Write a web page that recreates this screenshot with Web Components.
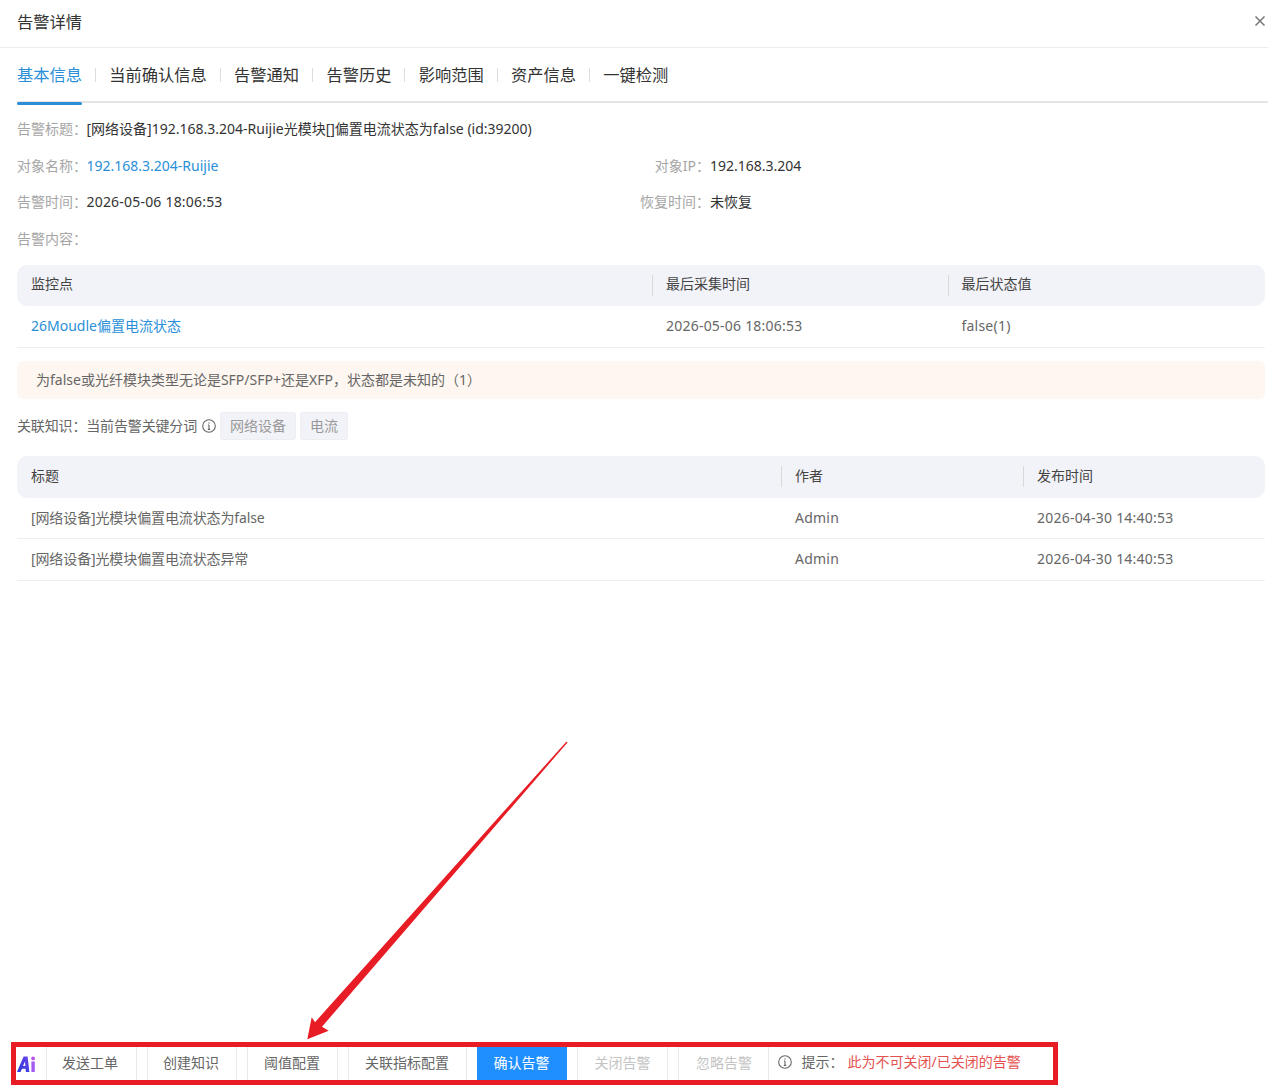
<!DOCTYPE html>
<html lang="zh-CN"><head><meta charset="utf-8">
<style>
html,body{margin:0;padding:0;background:#fff;}
body{width:1268px;height:1092px;overflow:hidden;position:relative;font-family:"Noto Sans","Noto Sans CJK SC",sans-serif;font-size:14px;color:#333;}
</style></head><body>
<alert-dialog>
  <span slot="title">告警详情</span>
  <tab-bar></tab-bar>
  <div style="padding:8px 3px 0 17px">
    <info-line label="告警标题&#xFF1A;" value="[网络设备]192.168.3.204-Ruijie光模块[]偏置电流状态为false (id:39200)"></info-line>
    <info-pair l1="对象名称&#xFF1A;" v1="192.168.3.204-Ruijie" link="1" l2="对象IP&#xFF1A;" v2="192.168.3.204"></info-pair>
    <info-pair l1="告警时间&#xFF1A;" v1="2026-05-06 18:06:53" ls=".2" l2="恢复时间&#xFF1A;" v2="未恢复"></info-pair>
    <info-line label="告警内容&#xFF1A;" value=""></info-line>
    <data-table style="margin-top:7px" cols="635,295.5,317.5" head="监控点|最后采集时间|最后状态值" rows="26Moudle偏置电流状态|2026-05-06 18:06:53|false(1)" link="1" h1="41" h2="42" up="3" first="0"></data-table>
    <alert-note>为false或光纤模块类型无论是SFP/SFP+还是XFP&#xFF0C;状态都是未知的&#xFF08;1&#xFF09;</alert-note>
    <knowledge-row></knowledge-row>
    <data-table style="margin-top:16px" cols="764,242,242" head="标题|作者|发布时间" rows="[网络设备]光模块偏置电流状态为false|Admin|2026-04-30 14:40:53;[网络设备]光模块偏置电流状态异常|Admin|2026-04-30 14:40:53" h1="42" h2="41.5" up="2" first="-.12"></data-table>
  </div>
</alert-dialog>
<action-bar></action-bar>
<red-annotation></red-annotation>
<script>
const info=`<svg width="14" height="14" viewBox="0 0 14 14" fill="none" stroke="#666" stroke-width="1.1" style="flex:none"><circle cx="7" cy="7" r="6.3"/><path d="M7 6v4.2M5.8 10.4h2.4M5.9 6h1.1" /><circle cx="7" cy="3.9" r=".7" fill="#666" stroke="none"/></svg>`;
function def(name,html){customElements.define(name,class extends HTMLElement{connectedCallback(){if(this.shadowRoot)return;const s=this.attachShadow({mode:'open'});s.innerHTML=typeof html==='function'?html(this):html;}});}
def('alert-dialog',`<style>:host{display:block}
.h{height:48px;border-bottom:1px solid #ececec;display:flex;align-items:center;justify-content:space-between;padding:0 2px 5px 17px;box-sizing:border-box;font-size:16.25px;color:#333}
.h svg{display:block}</style>
<div class="h"><slot name="title"></slot><svg width="12" height="12" viewBox="0 0 12 12" stroke="#777" stroke-width="1.5"><path d="M1.5 1.5l9 9M10.5 1.5l-9 9"/></svg></div><slot></slot>`);
def('tab-bar',`<style>:host{display:flex;height:55px;margin:0 0 0 17px;border-bottom:2px solid #e4e4e4;box-sizing:border-box;font-size:16.25px;color:#333}
.t{position:relative;line-height:54px;height:55px;white-space:nowrap}
.t.a{color:#2a8fd8}.t.a:after{content:"";position:absolute;left:0;right:0;bottom:-2px;height:3px;background:#2a8fd8;border-radius:2px}
i{width:1px;height:14px;background:#ddd;margin:20px 13.3px 0 13px}</style>
<div class="t a">基本信息</div><i></i><div class="t">当前确认信息</div><i></i><div class="t">告警通知</div><i></i><div class="t">告警历史</div><i></i><div class="t">影响范围</div><i></i><div class="t">资产信息</div><i></i><div class="t">一键检测</div>`);
const lab=`.l{color:#a6a6a6}.v{color:#333}.v.k{color:#2a8fd8}`;
def('info-line',e=>`<style>:host{display:block;height:36.67px;line-height:36.67px;font-size:14px;white-space:nowrap}${lab}</style><span class="l">${e.getAttribute('label')}</span><span class="v" style="margin-left:-.5px">${e.getAttribute('value')}</span>`);
def('info-pair',e=>`<style>:host{display:flex;height:36.67px;line-height:36.67px;font-size:14px;white-space:nowrap}${lab}
.c{width:623px;flex:none}.r{width:70px;display:inline-block;text-align:right}</style>
<div class="c"><span class="l">${e.getAttribute('l1')}</span><span class="v ${e.getAttribute('link')?'k':''}" style="letter-spacing:${e.getAttribute('ls')||0}px;margin-left:-.5px">${e.getAttribute('v1')}</span></div>
<div><span class="l r">${e.getAttribute('l2')}</span><span class="v">${e.getAttribute('v2')}</span></div>`);
def('data-table',e=>{const c=e.getAttribute('cols').split(',').map(x=>x+'px').join(' ');const h1=+e.getAttribute('h1'),h2=+e.getAttribute('h2'),up=+e.getAttribute('up');const k=e.getAttribute('link');
return `<style>:host{display:block;width:1248px;font-size:14px}
.r{display:grid;grid-template-columns:${c};}
.hd{background:#f2f3f8;border-radius:10px;height:${h1}px;color:#444}
.hd div{padding-left:14px;line-height:${h1-up}px;position:relative;white-space:nowrap}
.hd div+div:before{content:"";position:absolute;left:0;top:10px;height:21px;width:1px;background:#d9d9d9}
.b{height:${h2}px;border-bottom:1px solid #eee;box-sizing:border-box;color:#666;letter-spacing:.22px}
.b div{padding-left:14px;line-height:${h2-2}px;white-space:nowrap}
.b div:first-child{letter-spacing:${e.getAttribute('first')}px}
.b .k{color:#2a8fd8}</style>
<div class="r hd">${e.getAttribute('head').split('|').map(x=>`<div>${x}</div>`).join('')}</div>
${e.getAttribute('rows').split(';').map(r=>`<div class="r b">${r.split('|').map((x,i)=>`<div class="${k&&i==0?'k':''}">${x}</div>`).join('')}</div>`).join('')}`});
def('alert-note',`<style>:host{display:block;width:1229px;height:38px;margin-top:13px;padding-left:19px;background:#fef6f0;border-radius:6px;line-height:37px;color:#666;font-size:14px}</style><slot></slot>`);
def('knowledge-row',`<style>:host{display:flex;align-items:center;height:28px;margin-top:13px;color:#666;font-size:14px;white-space:nowrap;line-height:26px}
.x{letter-spacing:-.15px}.g{margin:0 0 0 4px;display:flex}.t{height:28px;line-height:26px;padding:0 9px;background:#f2f3f8;border:1px solid #eceef2;box-sizing:border-box;border-radius:3px;color:#999;margin-right:4px}
svg{margin-left:5px}</style><span class="x">关联知识&#xFF1A;当前告警关键分词</span>${info}<div class="g"><div class="t">网络设备</div><div class="t">电流</div></div>`);
def('action-bar',`<style>:host{position:absolute;left:17px;top:1046px;width:1036px;height:34px;display:flex;align-items:stretch;font-size:14px;color:#666;white-space:nowrap}
.ai{width:29px;flex:none;display:flex;align-items:center;padding-top:1px;box-sizing:border-box}
.b{border:solid #eaeaea;border-width:0 1px;line-height:34px;box-sizing:border-box;text-align:left;flex:none}
.b.p{background:#1f8fff;color:#fff;border-color:#1f8fff}.b.d{color:#c4c4c4}
.tip{display:flex;align-items:center;margin-left:9px;padding-bottom:2px;line-height:20px}.tip svg{margin:0 10px 0 0}.red{color:#e4524f;margin-left:4px}
</style>
<div class="ai"><svg width="19" height="16" viewBox="0 0 19 16"><defs><linearGradient id="g" x1="0" x2="1" y1="1" y2="0"><stop offset="0" stop-color="#2636dc"/><stop offset="1" stop-color="#6a46ea"/></linearGradient></defs><path fill="url(#g)" d="M0 16 L6.6 .5h4L12.4 16H8.9L8.6 12.8H5L3.5 16zM6 10h2.4L8 5.4z"/><rect x="14.4" y="5.5" width="3.4" height="10.5" fill="#a65af2"/><circle cx="16.1" cy="2.4" r="1.9" fill="#c04fe8"/></svg></div>
<div class="b" style="width:91px;padding-left:15px;margin-right:10px">发送工单</div><div class="b" style="width:90px;padding-left:15px;margin-right:10px">创建知识</div><div class="b" style="width:91px;padding-left:16px;margin-right:10px">阈值配置</div><div class="b" style="width:119px;padding-left:16px;margin-right:9.5px">关联指标配置</div><div class="b p" style="width:90.5px;padding-left:16px;margin-right:9.5px">确认告警</div><div class="b d" style="width:91.5px;padding-left:17px;margin-right:9.5px">关闭告警</div><div class="b d" style="width:91px;padding-left:17.5px">忽略告警</div>
<div class="tip">${info}<span>提示&#xFF1A;</span><span class="red">此为不可关闭/已关闭的告警</span></div>`);
def('red-annotation',`<style>:host{position:absolute;left:0;top:0;width:1268px;height:1092px;pointer-events:none}
.box{position:absolute;left:11px;top:1042px;width:1047px;height:43px;border:5px solid #e81c24;box-sizing:border-box}
svg{position:absolute;left:0;top:0}</style><div class="box"></div>
<svg width="1268" height="1092"><path fill="#e81c24" d="M566.5 741.5 L567.5 742.5 L322 1026.7 L328.7 1030.7 L307.3 1039.3 L311.7 1017.3 L315 1022.2 Z"/></svg>`);
</script>
</body></html>
